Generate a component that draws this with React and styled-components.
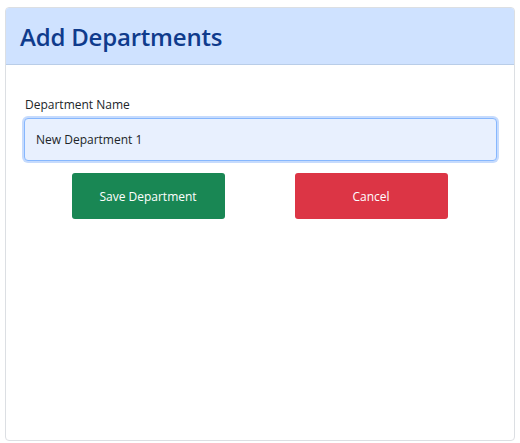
import React from "react";
import styled, { createGlobalStyle } from "styled-components";

const GlobalStyle = createGlobalStyle`
  body {
    margin: 0;
    background: #fff;
    font-family: "Open Sans", "Noto Sans", sans-serif;
  }
`;

const Page = styled.div`
  padding: 7px 5px 0 5px;
`;

const Card = styled.div`
  height: 434px;
  box-sizing: border-box;
  border: 1px solid #dcdfe3;
  border-radius: 4px;
  background: #fff;
  overflow: hidden;
`;

const Header = styled.div`
  height: 57px;
  box-sizing: border-box;
  display: flex;
  align-items: center;
  padding: 0 14px;
  background: #cfe2ff;
  border-bottom: 1px solid #b9cde8;
`;

const Title = styled.h2`
  margin: 0;
  font-size: 24px;
  font-weight: 600;
  color: #0f3b8c;
  letter-spacing: -0.2px;
`;

const Body = styled.div`
  padding: 31px 18px 0 17px;
`;

const Label = styled.label`
  display: block;
  font-size: 12px;
  font-weight: 500;
  color: #212529;
  margin: 0 0 5px 2px;
`;

const Input = styled.input`
  display: block;
  width: 100%;
  height: 43px;
  box-sizing: border-box;
  padding: 0 11px;
  font-family: inherit;
  font-size: 12px;
  color: #212529;
  background: #e8f0fe;
  border: 1px solid #86b7fe;
  border-radius: 4px;
  box-shadow: 0 0 0 2px #c6dbfd;
  outline: none;
  margin-left: 1px;
`;

const Actions = styled.div`
  display: flex;
  justify-content: center;
  gap: 70px;
  margin-top: 12px;
`;

const Button = styled.button`
  width: 153px;
  height: 46px;
  border: none;
  border-radius: 3px;
  font-family: inherit;
  font-size: 12px;
  color: #fff;
  background: ${(p) => (p.$variant === "danger" ? "#dc3545" : "#198754")};
  cursor: pointer;
`;

export default function App() {
  return (
    <>
      <GlobalStyle />
      <Page>
        <Card>
          <Header>
            <Title>Add Departments</Title>
          </Header>
          <Body>
            <Label htmlFor="dept">Department Name</Label>
            <Input id="dept" defaultValue="New Department 1" />
            <Actions>
              <Button>Save Department</Button>
              <Button $variant="danger">Cancel</Button>
            </Actions>
          </Body>
        </Card>
      </Page>
    </>
  );
}
